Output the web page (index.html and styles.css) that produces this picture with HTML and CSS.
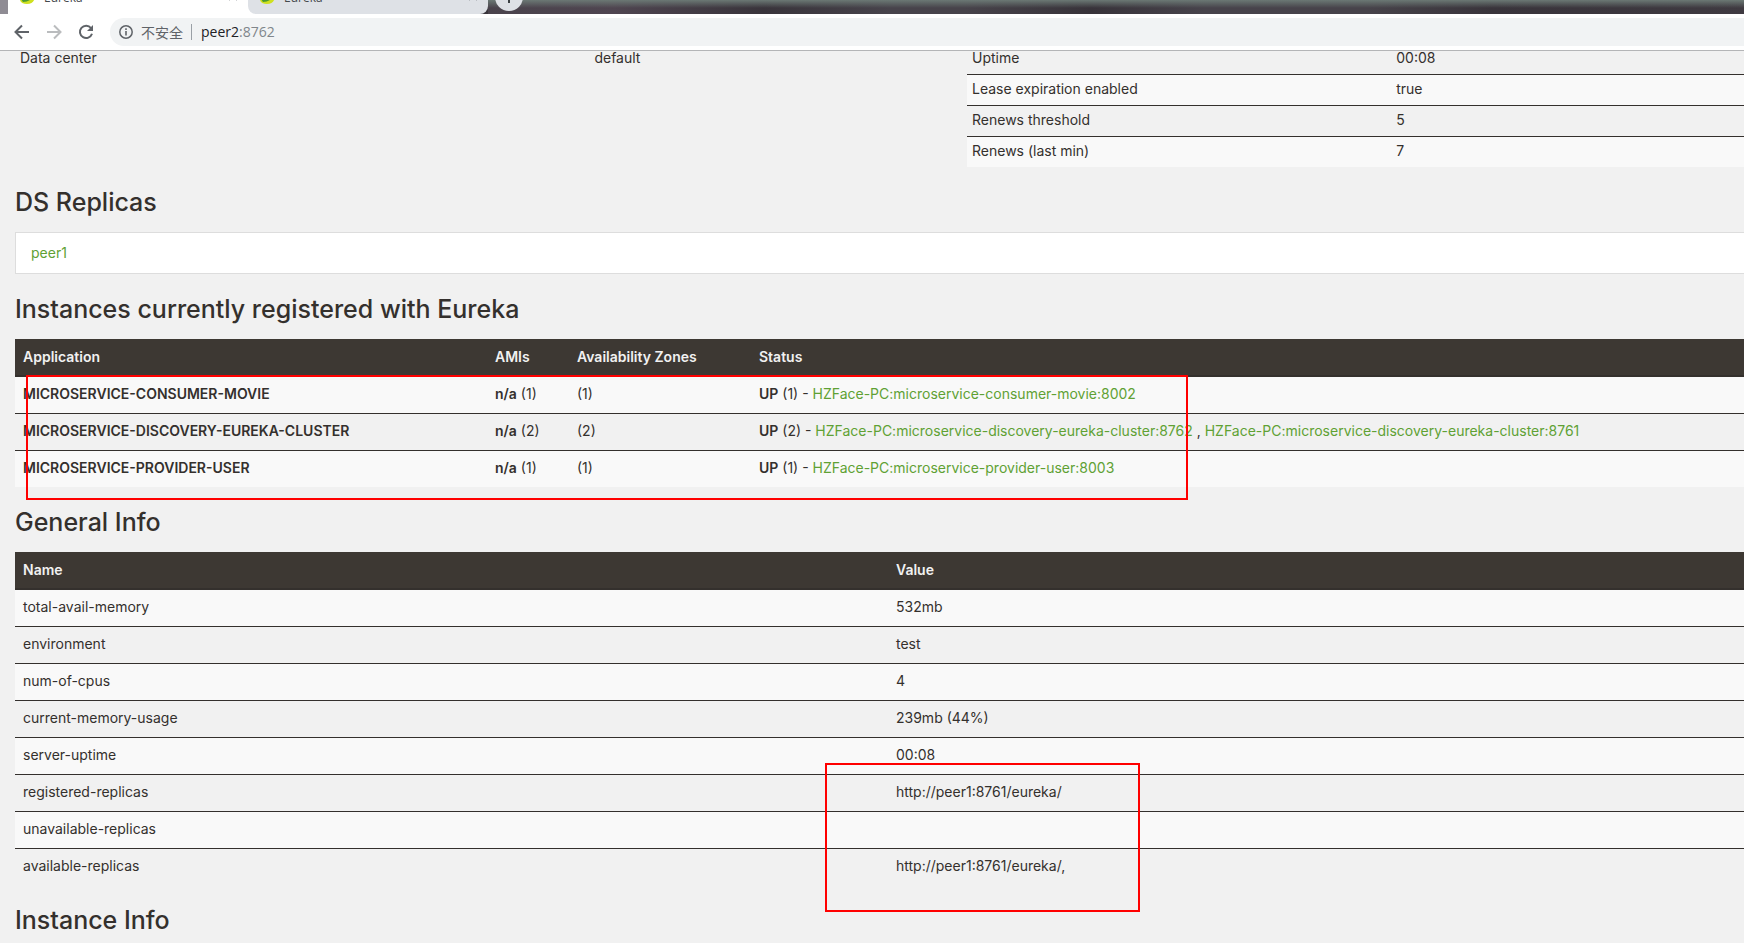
FILE: index.html
```html
<!DOCTYPE html>
<html lang="en">
<head>
<meta charset="utf-8">
<title>Eureka</title>
<link rel="stylesheet" href="styles.css">
</head>
<body>
<header class="browser">
  <div class="tabstrip">
    <div class="tab tab-active">
      <svg class="favicon" viewBox="0 0 16 16"><path d="M15 0C16 9 15 16 7 16Q1 16 0 12Q0 4 8 3Q13 3 15 0Z" fill="#cfe01f"/><path d="M1 11C7 12 12 9 15 1C15 9 10 14 3 14Z" fill="#4b9a2f"/></svg>
      <span class="tab-title">Eureka</span>
      <button class="tab-close" aria-label="Close tab"><svg viewBox="0 0 10 10"><path d="M1 1L9 9M9 1L1 9" stroke="#5f6368" stroke-width="1.5"/></svg></button>
    </div>
    <div class="tab-behind">
      <div class="tab">
        <svg class="favicon" viewBox="0 0 16 16"><path d="M15 0C16 9 15 16 7 16Q1 16 0 12Q0 4 8 3Q13 3 15 0Z" fill="#cfe01f"/><path d="M1 11C7 12 12 9 15 1C15 9 10 14 3 14Z" fill="#4b9a2f"/></svg>
        <span class="tab-title">Eureka</span>
        <button class="tab-close" aria-label="Close tab"><svg viewBox="0 0 10 10"><path d="M1 1L9 9M9 1L1 9" stroke="#5f6368" stroke-width="1.5"/></svg></button>
      </div>
    </div>
    <div class="strip-rest">
      <button class="new-tab" aria-label="New tab"><svg viewBox="0 0 12 12"><path d="M6 0V12M0 6H12" stroke="#3c4043" stroke-width="2"/></svg></button>
    </div>
  </div>
  <nav class="toolbar">
    <button class="nav-button" aria-label="Back"><svg viewBox="0 0 16 16" fill="none" stroke="#5f6368" stroke-width="2"><path d="M15 8H2.5M8 1.5L1.5 8L8 14.5"/></svg></button>
    <button class="nav-button" aria-label="Forward"><svg viewBox="0 0 16 16" fill="none" stroke="#babcbe" stroke-width="2"><path d="M1 8H13.5M8 1.5L14.5 8L8 14.5"/></svg></button>
    <button class="nav-button" aria-label="Reload"><svg viewBox="0 0 16 16"><path d="M13 4A6.2 6.2 0 1 0 14 9.8" fill="none" stroke="#5f6368" stroke-width="2"/><path d="M15 1V7H9Z" fill="#5f6368"/></svg></button>
    <div class="address">
      <svg class="info" viewBox="0 0 14 14"><circle cx="7" cy="7" r="6.2" fill="none" stroke="#5f6368" stroke-width="1.5"/><path d="M7 6V10.5M7 3.3V5" stroke="#5f6368" stroke-width="1.6"/></svg>
      <span class="insecure">不安全</span>
      <span class="url">peer2<span class="port">:8762</span></span>
    </div>
  </nav>
</header>
<main class="page">
  <div class="status-row">
    <table class="facts facts-left">
      <tr><td>Data center</td><td>default</td></tr>
    </table>
    <table class="facts facts-right">
      <tr><td>Uptime</td><td>00:08</td></tr>
      <tr><td>Lease expiration enabled</td><td>true</td></tr>
      <tr><td>Renews threshold</td><td>5</td></tr>
      <tr><td>Renews (last min)</td><td>7</td></tr>
    </table>
  </div>
  <h1>DS Replicas</h1>
  <ul class="replicas"><li><a href="#">peer1</a></li></ul>
  <h1>Instances currently registered with Eureka</h1>
  <div class="block">
    <table class="grid instances">
      <thead><tr><th>Application</th><th>AMIs</th><th>Availability Zones</th><th>Status</th></tr></thead>
      <tbody>
        <tr><td><b>MICROSERVICE-CONSUMER-MOVIE</b></td><td><b>n/a</b> (1)</td><td>(1)</td><td><b>UP</b> (1) - <a href="#">HZFace-PC:microservice-consumer-movie:8002</a></td></tr>
        <tr><td><b>MICROSERVICE-DISCOVERY-EUREKA-CLUSTER</b></td><td><b>n/a</b> (2)</td><td>(2)</td><td><b>UP</b> (2) - <a href="#">HZFace-PC:microservice-discovery-eureka-cluster:8762</a> , <a href="#">HZFace-PC:microservice-discovery-eureka-cluster:8761</a></td></tr>
        <tr><td><b>MICROSERVICE-PROVIDER-USER</b></td><td><b>n/a</b> (1)</td><td>(1)</td><td><b>UP</b> (1) - <a href="#">HZFace-PC:microservice-provider-user:8003</a></td></tr>
      </tbody>
    </table>
    <div class="mark mark-instances"></div>
  </div>
  <h1>General Info</h1>
  <div class="block">
    <table class="grid general">
      <thead><tr><th>Name</th><th>Value</th></tr></thead>
      <tbody>
        <tr><td>total-avail-memory</td><td>532mb</td></tr>
        <tr><td>environment</td><td>test</td></tr>
        <tr><td>num-of-cpus</td><td>4</td></tr>
        <tr><td>current-memory-usage</td><td>239mb (44%)</td></tr>
        <tr><td>server-uptime</td><td>00:08</td></tr>
        <tr><td>registered-replicas</td><td>http://peer1:8761/eureka/</td></tr>
        <tr><td>unavailable-replicas</td><td></td></tr>
        <tr><td>available-replicas</td><td>http://peer1:8761/eureka/,</td></tr>
      </tbody>
    </table>
    <div class="mark mark-replicas"></div>
  </div>
  <h1>Instance Info</h1>
</main>
</body>
</html>
```
FILE: styles.css
```css
* { box-sizing: border-box; }
body {
  margin: 0;
  height: 100vh;
  overflow: hidden;
  display: flex;
  flex-direction: column;
  background: #f1f1f1;
  color: #34302d;
  font: 14px/20px Inter, "Noto Sans", sans-serif;
}
button { border: 0; padding: 0; background: none; display: flex; align-items: center; justify-content: center; }
a { color: #5fa134; text-decoration: none; }
b, th { font-weight: 600; }

/* Browser chrome */
.browser { flex: none; background: #fff; border-bottom: 1px solid #b4b5b7; font-family: "Open Sans", sans-serif; }
.tabstrip {
  height: 14px;
  display: flex;
  align-items: flex-end;
  overflow: hidden;
  background: linear-gradient(90deg, #8f8c94 8px, #fff 8px);
}
.tab {
  flex: none;
  width: 240px;
  height: 36px;
  padding: 0 10px 0 12px;
  display: flex;
  align-items: center;
  gap: 8px;
  background: #dee1e6;
  border-radius: 0 0 8px 8px;
}
.tab-active { margin-left: 8px; background: #fff; }
.tab-behind { background: linear-gradient(90deg, #fff 50%, #39343b 50%); }
.favicon { width: 16px; height: 16px; }
.tab-title { flex: 1; padding-top: 4px; font-size: 12px; line-height: 16px; color: #45494d; }
.tab-close svg { width: 10px; height: 10px; }
.strip-rest {
  flex: 1;
  height: 36px;
  padding: 0 7px 3px;
  display: flex;
  align-items: flex-end;
  background:
    linear-gradient(#6b7874 22px, #6b787400 30px),
    linear-gradient(90deg, #4a434c, #4f4550 10%, #39343b 22%, #47434b 32%, #47434a 38%, #38333a 48%, #47434b 57%, #47434a 70%, #39343b 80%, #3f3a41);
}
.new-tab { flex: none; width: 28px; height: 28px; border-radius: 50%; background: #dee1e6; }
.new-tab svg { width: 12px; height: 12px; }
.toolbar { height: 36px; padding: 4px 0 4px 14px; display: flex; align-items: center; gap: 16px; }
.nav-button svg { width: 16px; height: 16px; }
.address {
  flex: 1;
  height: 28px;
  padding-left: 9px;
  display: flex;
  align-items: center;
  gap: 8px;
  background: #f1f3f4;
  border-radius: 14px 0 0 14px;
}
.info { width: 14px; height: 14px; }
.insecure { font: 14px/20px "Noto Sans CJK SC", sans-serif; color: #5f6368; }
.url { padding-left: 9px; border-left: 1px solid #9aa0a6; line-height: 16px; color: #202124; }
.port { color: #80868b; }

/* Eureka page */
.page { flex: 1; min-height: 0; padding-left: 15px; }
table { border-collapse: collapse; table-layout: fixed; }
td, th { text-align: left; vertical-align: top; }
.status-row { display: grid; grid-template-columns: 922fr 777fr; gap: 30px; align-items: start; margin-top: -7px; }
.facts { width: 100%; }
.facts td { padding: 4px 5px 6px; border-bottom: 1px solid #34302d; }
.facts tr:last-child td { border-bottom: 0; }
.facts-right tr:nth-child(even) { background: #f9f9f9; }
.facts-left td:first-child { width: 62.3%; }
.facts-right td:first-child { width: 54.6%; }
h1 { margin: 20px 0 15px; font: 500 25px/30px Inter, sans-serif; }
.replicas { list-style: none; margin: 0; padding: 10px 15px; border: 1px solid #ddd; border-right: 0; background: #fff; }
.block { position: relative; }
.grid { width: 100%; }
.grid th { padding: 8px; background: #3d3833; color: #f1f1f1; border-bottom: 2px solid #34302d; }
.grid td { padding: 7px 8px 9px; border-bottom: 1px solid #34302d; }
.grid tr:last-child td { border-bottom: 0; }
.grid tbody tr:nth-child(odd) { background: #f9f9f9; }
.instances th:nth-child(1) { width: 472px; }
.instances th:nth-child(2) { width: 82px; }
.instances th:nth-child(3) { width: 182px; }
.general th:first-child { width: 873px; }

/* Red annotation frames drawn over the tables */
.mark { position: absolute; border: 2px solid #f00; pointer-events: none; }
.mark-instances { left: 11px; top: 36px; width: 1162px; height: 125px; }
.mark-replicas { left: 810px; top: 211px; width: 315px; height: 149px; }
```
